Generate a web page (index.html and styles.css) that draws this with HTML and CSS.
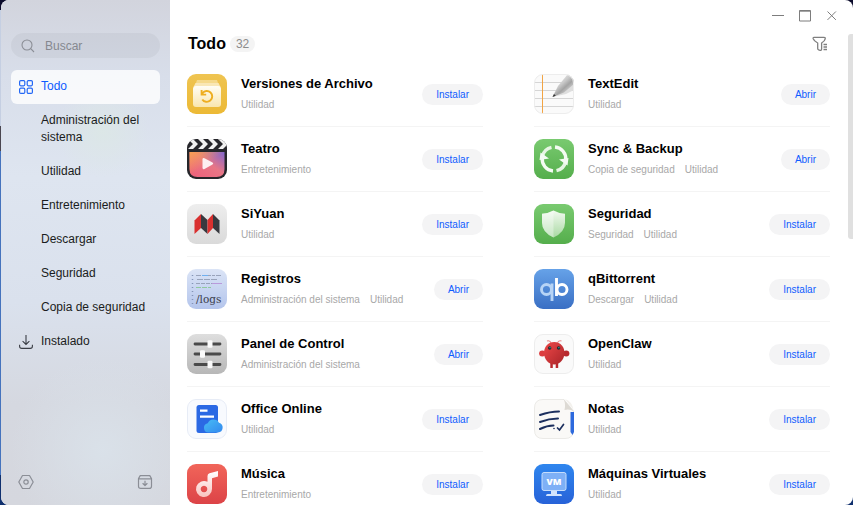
FILE: index.html
```html
<!DOCTYPE html>
<html lang="es">
  <head>
    <meta charset="UTF-8" />
    <meta name="viewport" content="width=device-width, initial-scale=1.0" />
    <title>Centro de aplicaciones</title>
    <link rel="stylesheet" href="styles.css">
  </head>
  <body>
    <div class="window">
      <aside class="sidebar">
        <label class="search">
          <svg width="14" height="14" viewBox="0 0 14 14" fill="none" stroke="#8b8e96" stroke-width="1.1">
            <circle cx="6" cy="6" r="5" />
            <path d="M9.7 9.7L13 13" />
          </svg>
          <input type="text" placeholder="Buscar" aria-label="Buscar" />
        </label>

        <nav class="menu">
          <a href="#" class="menu-item active">
            <svg width="14" height="14" viewBox="0 0 14 14" fill="none" stroke="#2468f5" stroke-width="1.2">
              <rect x="0.6" y="0.6" width="5.2" height="5.2" rx="1.2" />
              <rect x="8.2" y="0.6" width="5.2" height="5.2" rx="1.2" />
              <rect x="0.6" y="8.2" width="5.2" height="5.2" rx="1.2" />
              <rect x="8.2" y="8.2" width="5.2" height="5.2" rx="1.2" />
            </svg>
            <span>Todo</span>
          </a>
          <a href="#" class="menu-item"><span>Administración del sistema</span></a>
          <a href="#" class="menu-item"><span>Utilidad</span></a>
          <a href="#" class="menu-item"><span>Entretenimiento</span></a>
          <a href="#" class="menu-item"><span>Descargar</span></a>
          <a href="#" class="menu-item"><span>Seguridad</span></a>
          <a href="#" class="menu-item"><span>Copia de seguridad</span></a>
          <a href="#" class="menu-item">
            <svg width="14" height="14" viewBox="0 0 14 14" fill="none" stroke="#3a3d45" stroke-width="1.1">
              <path d="M7 0V9.4M3.6 6.2L7 9.5l3.4-3.3M0.6 9.8v1.4q0 2.2 2.2 2.2h8.4q2.2 0 2.2-2.2V9.8" />
            </svg>
            <span>Instalado</span>
          </a>
        </nav>

        <div class="sidebar-footer">
          <button class="icon-button" aria-label="Ajustes">
            <svg width="16" height="16" viewBox="0 0 16 16" fill="none" stroke="#8b8e96" stroke-width="1.2" stroke-linejoin="round">
              <path d="M4.5 1.5h7L15.2 8l-3.7 6.5h-7L0.8 8z" />
              <circle cx="8" cy="8" r="2.2" />
            </svg>
          </button>
          <button class="icon-button" aria-label="Instalación manual">
            <svg width="16" height="16" viewBox="0 0 16 16" fill="none" stroke="#8b8e96" stroke-width="1.2" stroke-linejoin="round">
              <path d="M1.5 4.6L3.2 1.6h9.6l1.7 3v7.6q0 2.2-2.2 2.2H3.7q-2.2 0-2.2-2.2zM1.5 4.8h13M8 6.8v4.6M5.6 9.2L8 11.5l2.4-2.3" />
            </svg>
          </button>
        </div>
      </aside>

      <main class="content">
        <div class="titlebar">
          <button class="icon-button" aria-label="Minimizar">
            <svg width="12" height="12" viewBox="0 0 12 12" stroke="#7d7d7d"><path d="M0 5.5h12" /></svg>
          </button>
          <button class="icon-button" aria-label="Maximizar">
            <svg width="12" height="12" viewBox="0 0 12 12" fill="none" stroke="#7d7d7d"><path d="M0.5 0.5h11v10.5H0.5zM0.5 1.2h11" /></svg>
          </button>
          <button class="icon-button" aria-label="Cerrar">
            <svg width="12" height="12" viewBox="0 0 12 12" stroke="#7d7d7d"><path d="M1.500 1.500l8.4 8.4M9.900 1.500L1.500 9.900" /></svg>
          </button>
        </div>

        <div class="header">
          <h1>Todo</h1>
          <span class="count">32</span>
          <button class="icon-button filter" aria-label="Filtrar">
            <svg width="16" height="16" viewBox="0 0 16 16" fill="none" stroke="#7f7f7f" stroke-width="1.3" stroke-linejoin="round">
              <path d="M2 1.400h10q1.600 0 1.200 1.400Q12.800 5 9.600 7v6.200q-.2 1.400-1.500 1.100l-1.400-.4q-1-.4-1-1.400V7Q2 5 1.200 2.800.800 1.400 2 1.400z" />
              <path d="M11.500 8.500h3.500M11.500 11h3.500M11.500 13.500h3.500" />
            </svg>
          </button>
        </div>

        <ul class="app-list">
          <li class="app">
            <svg class="app-icon" viewBox="0 0 40 40">
              <defs>
                <linearGradient id="gold" x1="0" y1="0" x2="0" y2="1"><stop offset="0" stop-color="#efc451" /><stop offset="1" stop-color="#ecb935" /></linearGradient>
                <linearGradient id="cream" x1="0" y1="0" x2="0" y2="1"><stop offset="0" stop-color="#fffdf5" /><stop offset="1" stop-color="#f9e6ae" /></linearGradient>
              </defs>
              <rect width="40" height="40" rx="9" fill="url(#gold)" />
              <path d="M10 6h20l2 6H8z" fill="#f5d98b" />
              <path d="M8.500 9h23l2 4h-27z" fill="#f9e7b5" />
              <rect x="6" y="12" width="28" height="21" rx="3" fill="url(#cream)" />
              <path d="M15.500 19.200a5.400 5.400 0 1 1-.2 6.200M14.600 16v4.600h4.600" fill="none" stroke="#eeae21" stroke-width="1.900" />
            </svg>
            <div class="app-info">
              <h2>Versiones de Archivo</h2>
              <p><span>Utilidad</span></p>
            </div>
            <button class="action">Instalar</button>
          </li>

          <li class="app">
            <svg class="app-icon" viewBox="0 0 40 40">
              <defs>
                <clipPath id="tile"><rect width="40" height="40" rx="9" /></clipPath>
                <linearGradient id="pencil" gradientUnits="userSpaceOnUse" x1="25" y1="6" x2="34" y2="16"><stop offset="0" stop-color="#dedede" /><stop offset="0.350" stop-color="#c9c9c9" /><stop offset="0.700" stop-color="#a3a3a3" /><stop offset="1" stop-color="#c4c4c4" /></linearGradient>
              </defs>
              <g clip-path="url(#tile)">
                <rect width="40" height="40" fill="#fafafa" />
                <path d="M0 8.500h40M0 16.500h40M0 24.500h40M0 32.500h40" stroke="#d5d5d5" />
                <path d="M8.500 0v40" stroke="#f2a444" />
                <path d="M18.500 23L32 20l8-4V9z" fill="#dedede" />
                <path d="M18.500 23L24 12 34 0l6 3v7L30 18.500z" fill="url(#pencil)" />
                <path d="M18.500 23l1.500-3 1.800 1.700z" fill="#333" />
              </g>
              <rect x="0.500" y="0.500" width="39" height="39" rx="8.500" fill="none" stroke="#ededed" />
            </svg>
            <div class="app-info">
              <h2>TextEdit</h2>
              <p><span>Utilidad</span></p>
            </div>
            <button class="action">Abrir</button>
          </li>

          <li class="app">
            <svg class="app-icon" viewBox="0 0 40 40">
              <defs>
                <linearGradient id="movie" x1="0" y1="1" x2="1" y2="0"><stop offset="0" stop-color="#ee5f7a" /><stop offset="0.550" stop-color="#e87686" /><stop offset="1" stop-color="#8167cf" /></linearGradient>
                <linearGradient id="glow" x1="0" y1="0" x2="1" y2="1"><stop offset="0" stop-color="#f9a052" /><stop offset="0.500" stop-color="#f9a052" stop-opacity="0" /></linearGradient>
              </defs>
              <g clip-path="url(#tile)">
                <rect width="40" height="40" fill="#26262b" />
                <path d="M1 0h5l5 5-5 5H1l5-5zM11 0h5l5 5-5 5h-5l5-5zM21 0h5l5 5-5 5h-5l5-5zM31 0h5l5 5-5 5h-5l5-5z" fill="#f1f1f1" />
                <path d="M2.500 13h35v17q0 8-8 8h-19q-8 0-8-8z" fill="url(#movie)" />
                <path d="M2.500 13h35v17q0 8-8 8h-19q-8 0-8-8z" fill="url(#glow)" />
                <path d="M15.500 20.500q0-2 2-1.200l8 4.200q1.500 1 0 2l-8 4.400q-2 .8-2-1.200z" fill="#fdeff1" />
              </g>
            </svg>
            <div class="app-info">
              <h2>Teatro</h2>
              <p><span>Entretenimiento</span></p>
            </div>
            <button class="action">Instalar</button>
          </li>

          <li class="app">
            <svg class="app-icon" viewBox="0 0 40 40">
              <defs>
                <linearGradient id="green" x1="0" y1="0" x2="0" y2="1"><stop offset="0" stop-color="#79ca70" /><stop offset="1" stop-color="#55ae4c" /></linearGradient>
              </defs>
              <rect width="40" height="40" rx="9" fill="url(#green)" />
              <path d="M17.500 8.300A12 12 0 0 0 8.500 17M22.500 31.700A12 12 0 0 0 31.500 23" fill="none" stroke="#e6f5e3" stroke-width="3.400" />
              <path d="M21 8A12 12 0 0 1 31.800 21M19 32A12 12 0 0 1 8.200 19" fill="none" stroke="#f4fbf3" stroke-width="3.400" />
              <path d="M25 20.500l9.500-1.500-1 7.500zM15 19.500L5.500 21l1-7.500z" fill="#f4fbf3" />
            </svg>
            <div class="app-info">
              <h2>Sync &amp; Backup</h2>
              <p><span>Copia de seguridad</span><span>Utilidad</span></p>
            </div>
            <button class="action">Abrir</button>
          </li>

          <li class="app">
            <svg class="app-icon" viewBox="0 0 40 40">
              <defs>
                <linearGradient id="silver" x1="0" y1="0" x2="0" y2="1"><stop offset="0" stop-color="#eeeeee" /><stop offset="1" stop-color="#dadada" /></linearGradient>
              </defs>
              <rect width="40" height="40" rx="9" fill="url(#silver)" />
              <path d="M7.500 16.500L14 10v14l-6.500 6z" fill="#d9302f" />
              <path d="M14 10l6.500 6v14L14 24z" fill="#38393f" />
              <path d="M20.500 16L26 10v14l-5.500 6z" fill="#d9302f" />
              <path d="M26 10l6.500 6.500V30L26 24z" fill="#38393f" />
            </svg>
            <div class="app-info">
              <h2>SiYuan</h2>
              <p><span>Utilidad</span></p>
            </div>
            <button class="action">Instalar</button>
          </li>

          <li class="app">
            <svg class="app-icon" viewBox="0 0 40 40">
              <defs>
                <linearGradient id="shield" x1="0" y1="0" x2="0" y2="1"><stop offset="0" stop-color="#f2faf0" /><stop offset="1" stop-color="#a9d9a3" /></linearGradient>
              </defs>
              <rect width="40" height="40" rx="9" fill="url(#green)" />
              <path d="M19.500 6.500q5 2.800 11.500 3.300v9q0 9.500-11.500 14.700Q8 28.300 8 18.800v-9q6.500-.5 11.500-3.300z" fill="url(#shield)" />
              <path d="M19.500 6.500v27Q8 28.300 8 18.800v-9q6.500-.5 11.500-3.300z" fill="#fff" fill-opacity="0.350" />
            </svg>
            <div class="app-info">
              <h2>Seguridad</h2>
              <p><span>Seguridad</span><span>Utilidad</span></p>
            </div>
            <button class="action">Instalar</button>
          </li>

          <li class="app">
            <svg class="app-icon" viewBox="0 0 40 40">
              <defs>
                <linearGradient id="logs" x1="0" y1="0" x2="0" y2="1"><stop offset="0" stop-color="#dbe4f6" /><stop offset="1" stop-color="#b4c5ec" /></linearGradient>
              </defs>
              <rect width="40" height="40" rx="9" fill="url(#logs)" />
              <path d="M5.500 6v31" stroke="#8494b8" stroke-width="1.500" stroke-dasharray="1 3" />
              <g stroke-width="1" opacity="0.800">
                <path d="M9 6.500h25" stroke="#8b95ad" stroke-dasharray="5 1 3 1" />
                <path d="M15 6.500h6" stroke="#59a5ef" />
                <path d="M10 10.500h20" stroke="#8b95ad" stroke-dasharray="6 1" />
                <path d="M9 14.500h16" stroke="#8b95ad" stroke-dasharray="4 1" />
                <path d="M25 14.500h10" stroke="#b58bd6" />
                <path d="M9 18.500h15" stroke="#83c58a" stroke-dasharray="5 1" />
              </g>
              <text x="9" y="33.500" font-family="DejaVu Serif, serif" font-size="10.500" fill="#3c414d">/logs</text>
            </svg>
            <div class="app-info">
              <h2>Registros</h2>
              <p><span>Administración del sistema</span><span>Utilidad</span></p>
            </div>
            <button class="action">Abrir</button>
          </li>

          <li class="app">
            <svg class="app-icon" viewBox="0 0 40 40">
              <defs>
                <linearGradient id="sky" x1="0" y1="0" x2="0" y2="1"><stop offset="0" stop-color="#66a2e8" /><stop offset="1" stop-color="#3a6fc4" /></linearGradient>
              </defs>
              <rect width="40" height="40" rx="9" fill="url(#sky)" />
              <g fill="none" stroke-width="2.900">
                <path d="M18 14.500v17.500" stroke="#b7d4f6" />
                <circle cx="12.500" cy="20.500" r="5" stroke="#b7d4f6" />
                <path d="M22.500 9v18" stroke="#fff" />
                <circle cx="28" cy="20.500" r="5" stroke="#fff" />
              </g>
            </svg>
            <div class="app-info">
              <h2>qBittorrent</h2>
              <p><span>Descargar</span><span>Utilidad</span></p>
            </div>
            <button class="action">Instalar</button>
          </li>

          <li class="app">
            <svg class="app-icon" viewBox="0 0 40 40">
              <defs>
                <linearGradient id="steel" x1="0" y1="0" x2="0" y2="1"><stop offset="0" stop-color="#dedede" /><stop offset="1" stop-color="#b7b7b7" /></linearGradient>
              </defs>
              <rect width="40" height="40" rx="9" fill="url(#steel)" />
              <path d="M8 10h25M8 20h25M8 30.500h25" stroke="#4a4a4a" stroke-width="2.800" stroke-linecap="round" />
              <g fill="#fafafa">
                <rect x="20.500" y="6.300" width="5" height="7.500" rx="1.300" />
                <rect x="13" y="16.300" width="5" height="7.500" rx="1.300" />
                <rect x="20.500" y="26.700" width="5" height="7.500" rx="1.300" />
              </g>
            </svg>
            <div class="app-info">
              <h2>Panel de Control</h2>
              <p><span>Administración del sistema</span></p>
            </div>
            <button class="action">Abrir</button>
          </li>

          <li class="app">
            <svg class="app-icon" viewBox="0 0 40 40">
              <defs>
                <linearGradient id="red" x1="0" y1="0" x2="1" y2="1"><stop offset="0" stop-color="#ee4848" /><stop offset="1" stop-color="#a92429" /></linearGradient>
              </defs>
              <rect x="0.500" y="0.500" width="39" height="39" rx="8.500" fill="#fafafa" stroke="#ededed" />
              <path d="M17 9q-1-3-4-2M23.500 9q1-3 4-2" fill="none" stroke="#e98787" stroke-width="1.200" />
              <ellipse cx="8.300" cy="19.500" rx="3.200" ry="3" fill="#dc3d3f" />
              <ellipse cx="32.200" cy="19.500" rx="3.200" ry="3" fill="#b9282d" />
              <path d="M16.300 29h2.500v5h-2.500zM21.700 29h2.500v5h-2.500z" fill="#b9282d" />
              <path d="M20.200 8C27 8 30.500 13.500 30.500 19c0 6-4.500 11.500-10.300 11.500S10 25 10 19C10 13.500 13.500 8 20.200 8z" fill="url(#red)" />
              <circle cx="15.700" cy="14" r="1.700" fill="#20282c" />
              <circle cx="24.600" cy="14" r="1.700" fill="#20282c" />
              <circle cx="16" cy="13.700" r="0.600" fill="#39c5c0" />
              <circle cx="24.900" cy="13.700" r="0.600" fill="#39c5c0" />
            </svg>
            <div class="app-info">
              <h2>OpenClaw</h2>
              <p><span>Utilidad</span></p>
            </div>
            <button class="action">Instalar</button>
          </li>

          <li class="app">
            <svg class="app-icon" viewBox="0 0 40 40">
              <defs>
                <linearGradient id="cloud" x1="0" y1="0" x2="1" y2="1"><stop offset="0" stop-color="#48bdf5" /><stop offset="1" stop-color="#3389ef" /></linearGradient>
              </defs>
              <rect x="0.500" y="0.500" width="39" height="39" rx="8.500" fill="#f8fafe" stroke="#e7ecf6" />
              <rect x="9.500" y="6" width="21.500" height="28" rx="2.500" fill="#2b69e4" />
              <path d="M13 11.700h7.500M13 17.700h14" stroke="#fff" stroke-width="2.200" />
              <path d="M21.500 33.500a4.700 4.700 0 0 1-.8-9.300 6.300 6.300 0 0 1 11.300-.5 5 5 0 0 1-1 9.800z" fill="url(#cloud)" />
            </svg>
            <div class="app-info">
              <h2>Office Online</h2>
              <p><span>Utilidad</span></p>
            </div>
            <button class="action">Instalar</button>
          </li>

          <li class="app">
            <svg class="app-icon" viewBox="0 0 40 40">
              <path d="M9 .5h21l9.500 11.500V31q0 8.500-8.500 8.500H9Q.5 39.500.5 31V9Q.5.5 9 .5z" fill="#faf9f7" stroke="#ebeae7" />
              <path d="M29.500 0Q32 5 30.500 11q5-1.500 9.500 1.500z" fill="#dddad4" />
              <path d="M31 0Q38 2 39.500 11z" fill="#f3f1ed" />
              <g fill="none" stroke="#1c2f5e" stroke-width="2" stroke-linecap="round">
                <path d="M6 16q10-3.500 19-3.500M6 23q9-3.500 18-3.500M6 30q7-3.500 13.500-3.500" />
                <path d="M23.500 29l2 2 4-5.500" stroke-width="1.700" />
              </g>
              <circle cx="20" cy="29.500" r="0.800" fill="#1c2f5e" />
              <path d="M36.500 13h3.500v20l-1.500 3-2-3z" fill="#2d69dd" />
            </svg>
            <div class="app-info">
              <h2>Notas</h2>
              <p><span>Utilidad</span></p>
            </div>
            <button class="action">Instalar</button>
          </li>

          <li class="app">
            <svg class="app-icon" viewBox="0 0 40 40">
              <defs>
                <linearGradient id="coral" x1="0" y1="0" x2="0" y2="1"><stop offset="0" stop-color="#f1655a" /><stop offset="1" stop-color="#dc4347" /></linearGradient>
                <linearGradient id="note" x1="0" y1="0" x2="0" y2="1"><stop offset="0" stop-color="#fff" /><stop offset="1" stop-color="#f9c3bf" /></linearGradient>
              </defs>
              <rect width="40" height="40" rx="9" fill="url(#coral)" />
              <path d="M20.500 12q0-2 2-2.700L31 7v5.500l-6 1.700V25a8 8 0 1 1-4.500-7.200zM17 21.700a3.300 3.300 0 1 0 .01 0z" fill="url(#note)" fill-rule="evenodd" />
            </svg>
            <div class="app-info">
              <h2>Música</h2>
              <p><span>Entretenimiento</span></p>
            </div>
            <button class="action">Instalar</button>
          </li>

          <li class="app">
            <svg class="app-icon" viewBox="0 0 40 40">
              <defs>
                <linearGradient id="blue" x1="0" y1="0" x2="0" y2="1"><stop offset="0" stop-color="#2f86ee" /><stop offset="1" stop-color="#2762d8" /></linearGradient>
              </defs>
              <rect width="40" height="40" rx="9" fill="url(#blue)" />
              <rect x="8" y="8.500" width="24" height="18" rx="2" fill="#7eb0f6" stroke="#c5ddfc" />
              <path d="M17 27h6v3h3.500q1.500 0 1.500 2H12q0-2 1.500-2H17z" fill="#d2e4fd" />
              <text x="20" y="20.500" text-anchor="middle" font-family="Open Sans, sans-serif" font-weight="800" font-size="9" fill="#fff">VM</text>
            </svg>
            <div class="app-info">
              <h2>Máquinas Virtuales</h2>
              <p><span>Utilidad</span></p>
            </div>
            <button class="action">Instalar</button>
          </li>
        </ul>

        <div class="scrollbar"></div>
      </main>
    </div>
  </body>
</html>
```

FILE: styles.css
```css
* {
  box-sizing: border-box;
}

body {
  margin: 0;
  font-family: "Liberation Sans", Arial, sans-serif;
  font-size: 12px;
  color: #1a1c20;
  background: linear-gradient(#0b0b2b 0 2%, #c5cfe2 2% 25%, #4a4650 25% 30%, #4573bd 30% 94%, #10306e 94%);
  overflow: hidden;
}

h1,
h2,
p,
ul {
  margin: 0;
  padding: 0;
}

button {
  border: none;
  font-family: inherit;
  cursor: pointer;
}

svg {
  display: block;
  flex: none;
}

.window {
  display: flex;
  height: 100vh;
  margin-left: 1px;
  border-radius: 8px;
  background-color: #ffffff;
  overflow: hidden;
}

/* 侧边栏 */
.sidebar {
  display: flex;
  flex-direction: column;
  flex: none;
  width: 169px;
  padding: 33px 10px 15px;
  background:
    radial-gradient(circle at 60% 89%, rgba(218, 226, 234, 0.9), transparent 20%),
    radial-gradient(circle at 60% 26%, rgba(220, 232, 229, 0.8), transparent 12%),
    linear-gradient(#d2d4dd, #d8deea 15%, #dee5f0 35%, #dae1ed 60%, #d5d8e0 80%, #d5d7de);
}

.search {
  display: flex;
  align-items: center;
  gap: 10px;
  height: 25px;
  padding: 0 10px;
  border-radius: 13px;
  background-color: rgba(0, 0, 0, 0.04);
}

.search input {
  width: 100%;
  min-width: 0;
  padding: 0;
  border: none;
  outline: none;
  background: transparent;
  font-family: inherit;
  font-size: 12px;
}

.search input::placeholder {
  color: #85888f;
}

.menu {
  margin-top: 12px;
}

.menu-item {
  display: flex;
  align-items: center;
  gap: 8px;
  padding: 8px 8px 9px;
  border-radius: 6px;
  line-height: 17px;
  color: #1a1c20;
  text-decoration: none;
}

.menu-item span:only-child {
  margin-left: 22px;
}

.menu-item.active {
  background-color: rgba(255, 255, 255, 0.8);
  color: #0f5cff;
}

.sidebar-footer {
  display: flex;
  justify-content: space-between;
  margin-top: auto;
  padding: 0 7px;
}

.icon-button {
  padding: 0;
  background: transparent;
}

/* 主内容 */
.content {
  position: relative;
  flex: 1;
  min-width: 0;
  padding: 0 23px 0 17px;
}

.titlebar {
  display: flex;
  justify-content: flex-end;
  gap: 15px;
  margin-right: -8px;
  padding-top: 10px;
}

.header {
  display: flex;
  align-items: center;
  height: 20px;
  margin: 12px 0 8px;
  padding-left: 1px;
}

.header h1 {
  font-size: 16px;
  color: #000000;
}

.count {
  margin-left: 4px;
  padding: 0 6px;
  border-radius: 8px;
  background-color: #f4f4f4;
  line-height: 16px;
  color: #8c8c8c;
}

.filter {
  margin-left: auto;
  margin-right: 2px;
}

.app-list {
  display: grid;
  grid-template-columns: 1fr 1fr;
  column-gap: 51px;
  list-style: none;
}

.app {
  display: flex;
  align-items: center;
  height: 65px;
  border-bottom: 1px solid #f4f4f4;
}

.app-icon {
  width: 40px;
  height: 40px;
}

.app-info {
  flex: 1;
  min-width: 0;
  margin-left: 14px;
  padding-top: 1px;
}

.app-info h2 {
  font-size: 13px;
  line-height: 20px;
  color: #000000;
}

.app-info p {
  display: flex;
  gap: 10px;
  margin-top: 1px;
  font-size: 10px;
  line-height: 20px;
  color: #a8a8a8;
}

.action {
  height: 21px;
  padding: 0 14px;
  border-radius: 11px;
  background-color: #f4f4f5;
  font-size: 10px;
  color: #0f5cff;
}

.action:hover {
  background-color: #e8e8ea;
}

.scrollbar {
  position: absolute;
  top: 34px;
  right: 0;
  width: 5px;
  height: 205px;
  border-radius: 3px 0 0 3px;
  background-color: #e0e0e0;
}
```
